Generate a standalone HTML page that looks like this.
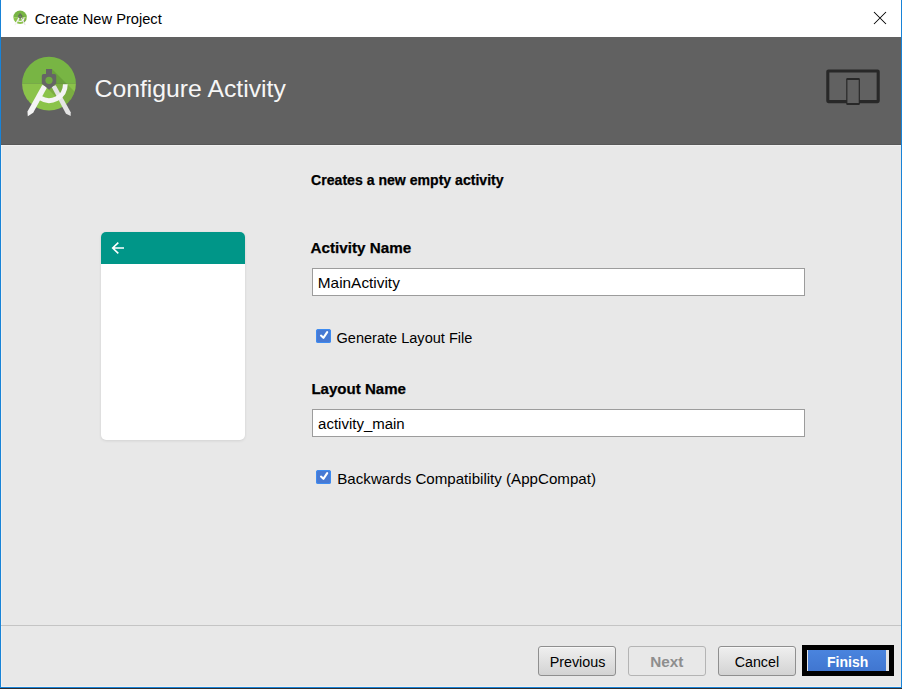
<!DOCTYPE html>
<html><head><meta charset="utf-8">
<style>
*{margin:0;padding:0;box-sizing:border-box}
html,body{width:902px;height:689px;overflow:hidden;background:#e8e8e8;font-family:"Liberation Sans",sans-serif;position:relative}
.a{position:absolute}
.t{position:absolute;white-space:nowrap;line-height:1}
.b{font-weight:700;-webkit-text-stroke:0.25px #000}
</style></head><body>
<!-- desktop strip at bottom -->
<div class="a" style="left:0;top:688px;width:902px;height:1px;background:#2e2c2e"></div>
<!-- title bar -->
<div class="a" style="left:0;top:0;width:902px;height:37px;background:#fff"></div>
<div class="t" style="left:34.7px;top:11.6px;font-size:14.66px;color:#000">Create New Project</div>
<svg class="a" style="left:0;top:0" width="902" height="37">
  <path d="M874 12L886 24M886 12L874 24" stroke="#000" stroke-width="1.05" fill="none"/>
</svg>
<!-- header -->
<div class="a" style="left:0;top:37px;width:902px;height:107px;background:#616161"></div>
<div class="a" style="left:0;top:144px;width:902px;height:1px;background:#585858"></div>
<div class="a" style="left:0;top:145px;width:902px;height:1px;background:#f0f0f0"></div>
<svg class="a" style="left:0;top:0" width="902" height="145">
  <defs>
    <g id="aslogo">
      <clipPath id="cc"><circle cx="49" cy="83.7" r="26.9"/></clipPath>
      <g clip-path="url(#cc)">
        <rect x="20" y="55" width="60" height="28.8" fill="#78b544"/>
        <rect x="20" y="83.8" width="60" height="30" fill="#8bc34a"/>
        <path d="M52 69 L92 109 L89 130 L49 90 Z" fill="#000" opacity="0.11"/>
        <path d="M28 99 A22 22 0 0 0 70 99 L70 115 L28 115 Z" fill="#000" opacity="0.1"/>
      </g>
      <path d="M55.8 85.2 L51.4 86.6 L66 113.8 L70.7 116.1 L70.7 112.2 Z" fill="#e4e4e4"/>
      <path d="M65.35 84.2 A16.35 16.35 0 0 1 40 97.85" stroke="#f4f4f4" stroke-width="4.75" fill="none"/>
      <path d="M42.2 85 L47.6 86.6 L33.2 112.8 L27.8 116.3 L27.5 111.6 Z" fill="#f4f4f4"/>
      <path d="M46 69 H52 V74 H54.4 Q56.2 74 56.2 75.8 V83.6 L49 89.7 L41.8 83.6 V75.8 Q41.8 74 43.6 74 H46 Z" fill="#656565"/>
      <circle cx="49" cy="80.3" r="3.6" fill="#6fa942"/>
    </g>
  </defs>
  <use href="#aslogo"/>
  <!-- device icon -->
  <rect x="827.8" y="71" width="50.4" height="30.6" rx="0.6" fill="none" stroke="#282828" stroke-width="3.1"/>
  <rect x="846.2" y="78" width="13.7" height="27" rx="1.2" fill="#282828"/>
  <rect x="847.4" y="80" width="11.3" height="23" fill="#616161"/>
</svg>
<svg class="a" style="left:0;top:0" width="40" height="37"><use href="#aslogo" transform="translate(7.85,-3.7) scale(0.25)"/></svg>
<div class="t" style="left:94.5px;top:76.5px;font-size:24.77px;color:#f6f6f6">Configure Activity</div>

<!-- content -->
<div class="t b" style="left:311.1px;top:173.4px;font-size:14.09px;color:#000">Creates a new empty activity</div>

<div class="a" style="left:101px;top:232px;width:144px;height:208px;background:#fff;border-radius:5px;overflow:hidden;box-shadow:0 1px 3px rgba(0,0,0,0.09),0 0 1px rgba(0,0,0,0.05)">
  <div class="a" style="left:0;top:0;width:144px;height:32px;background:#009688"></div>
</div>
<svg class="a" style="left:0;top:0" width="902" height="689">
  <path d="M124 248 H113 M118.3 242.6 L112.7 248 L118.3 253.4" stroke="#fff" stroke-width="1.6" fill="none"/>
</svg>

<div class="t b" style="left:310.6px;top:239.8px;font-size:15.21px;color:#000">Activity Name</div>
<div class="a" style="left:312px;top:268px;width:493px;height:28px;background:#fff;border:1px solid #9c9c9c"></div>
<div class="t" style="left:317.8px;top:274.7px;font-size:15.39px;color:#000">MainActivity</div>

<div class="a" style="left:316px;top:329px;width:15px;height:14px;background:#4779d3;border-radius:2.5px;box-shadow:inset 0 0 0 1px #3d8cf2"></div>
<div class="t" style="left:336.5px;top:330.7px;font-size:14.55px;color:#000">Generate Layout File</div>

<div class="t b" style="left:311.4px;top:380.5px;font-size:15.06px;color:#000">Layout Name</div>
<div class="a" style="left:312px;top:409px;width:493px;height:28px;background:#fff;border:1px solid #9c9c9c"></div>
<div class="t" style="left:318.1px;top:415.9px;font-size:14.99px;color:#000">activity_main</div>

<div class="a" style="left:316px;top:470px;width:15px;height:14px;background:#4779d3;border-radius:2.5px;box-shadow:inset 0 0 0 1px #3d8cf2"></div>
<div class="t" style="left:337.3px;top:470.9px;font-size:15.12px;color:#000">Backwards Compatibility (AppCompat)</div>

<svg class="a" style="left:0;top:0" width="902" height="689">
  <path d="M321 335.6 L323.4 337.8 L327.2 332.2" stroke="#fff" stroke-width="2.1" fill="none" stroke-linecap="round" stroke-linejoin="round"/>
  <path d="M321 476.6 L323.4 478.8 L327.2 473.2" stroke="#fff" stroke-width="2.1" fill="none" stroke-linecap="round" stroke-linejoin="round"/>
</svg>

<!-- footer -->

<div class="a" style="left:538px;top:646px;width:78px;height:30px;border:1px solid #8f8f8f;border-radius:3px;background:linear-gradient(#efefef,#d3d3d3);box-shadow:inset 0 1px 0 rgba(255,255,255,0.5)"></div>
<div class="t" style="left:549.7px;top:655px;font-size:14.32px;color:#000">Previous</div>
<div class="a" style="left:628px;top:646px;width:78px;height:30px;border:1px solid #b4b4b4;border-radius:3px;background:#e8e8e8"></div>
<div class="t" style="left:650.2px;top:653.9px;font-size:15.3px;font-weight:700;color:#8e8e8e">Next</div>
<div class="a" style="left:718px;top:646px;width:78px;height:30px;border:1px solid #8f8f8f;border-radius:3px;background:linear-gradient(#efefef,#d3d3d3);box-shadow:inset 0 1px 0 rgba(255,255,255,0.5)"></div>
<div class="t" style="left:734.7px;top:654.8px;font-size:14.27px;color:#000">Cancel</div>

<div class="a" style="left:802px;top:645px;width:92px;height:31px;background:#000"></div>
<div class="a" style="left:807px;top:650px;width:82px;height:21px;background:#e4e4e4"></div>
<div class="a" style="left:808px;top:650px;width:78px;height:21px;background:linear-gradient(#4a84de,#4076d0)"></div>
<div class="t" style="left:827px;top:655.1px;font-size:14.02px;font-weight:700;color:#fff">Finish</div>

<!-- window border -->
<div class="a" style="left:0;top:0;width:1px;height:688px;background:#1883d7"></div>
<div class="a" style="left:901px;top:0;width:1px;height:688px;background:#1883d7"></div>
<div class="a" style="left:0;top:687px;width:902px;height:1px;background:#1883d7"></div>
<div class="a" style="left:1px;top:146px;width:1px;height:541px;background:#f0f0f0"></div>
<div class="a" style="left:1px;top:686px;width:900px;height:1px;background:#f0f0f0"></div>
<div class="a" style="left:1px;top:625px;width:900px;height:1px;background:#c4c4c4"></div>
</body></html>
